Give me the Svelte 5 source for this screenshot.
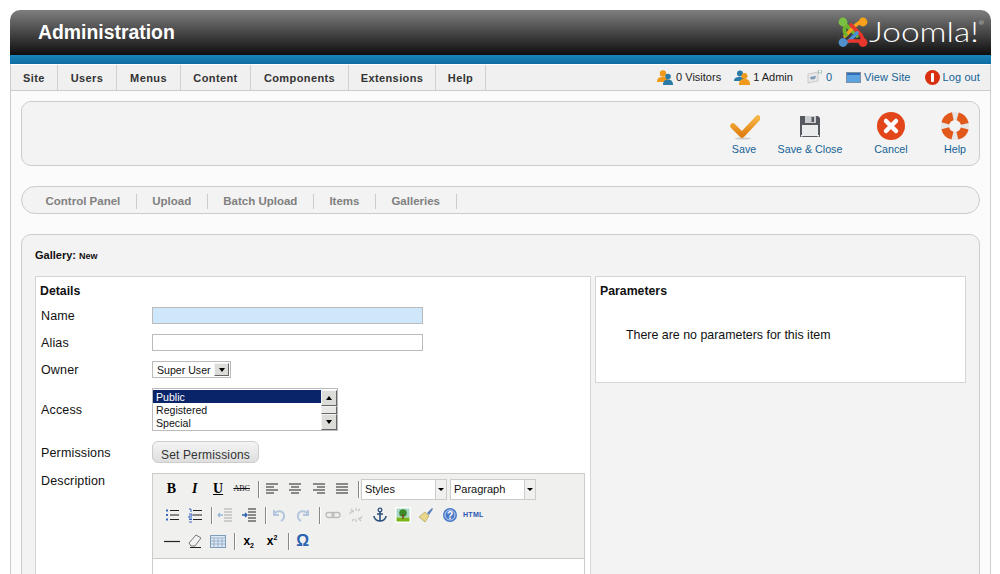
<script>
  // cell widths read off the reference menu bar
  const menu = [
    { label: 'Site', width: 47 },
    { label: 'Users', width: 59 },
    { label: 'Menus', width: 64 },
    { label: 'Content', width: 70 },
    { label: 'Components', width: 98 },
    { label: 'Extensions', width: 87 },
    { label: 'Help', width: 50 }
  ];
  const subnav = ['Control Panel', 'Upload', 'Batch Upload', 'Items', 'Galleries'];
  const access = ['Public', 'Registered', 'Special'];
</script>

<div class="page">
  <header class="head">
    <h1>Administration</h1>
    <div class="logo">
      <svg width="30" height="31" viewBox="0 0 30 31">
        <g fill="none" stroke-width="3.6" stroke-linecap="round">
          <path d="M5 6 L8 8 L19 19" stroke="#6fb52c" />
          <path d="M25 6 C22 5 20 6 18 8 L7 19" stroke="#f4a21d" />
          <path d="M13 8 L23 18 C25 21 25 23 25 25" stroke="#e8382d" />
          <path d="M5 25 C8 26 10 25 12 23 L19 16" stroke="#4a90d6" />
          <path d="M8 8 C6 11 6 15 8 18" stroke="#6fb52c" />
          <path d="M11 24 L21 24" stroke="#e8382d" />
        </g>
        <circle cx="5" cy="5" r="4.4" fill="#7ac143" />
        <circle cx="25" cy="5" r="4.4" fill="#f9a11b" />
        <circle cx="5" cy="25.5" r="4.4" fill="#5091cd" />
        <circle cx="25" cy="25.5" r="4.4" fill="#e8382d" />
      </svg>
      <span class="wordmark"><span>Joomla!<sup>®</sup></span></span>
    </div>
  </header>
  <div class="band"></div>

  <nav class="menubar">
    <ul class="menu">
      {#each menu as item}
        <li style="width: {item.width}px">{item.label}</li>
      {/each}
    </ul>
    <div class="status">
      <span class="stat">
        <svg width="16" height="15" viewBox="0 0 16 15">
          <circle cx="6" cy="3.500" r="3.200" fill="#f09a1c" /><path d="M0 12c0-4 2-5 6-5s5 1 5 5z" fill="#f09a1c" />
          <circle cx="11" cy="6.500" r="2.800" fill="#2a7ba8" /><path d="M6 15c0-4 2-5.500 5-5.500s5 1.500 5 5.500z" fill="#2a7ba8" />
        </svg>
        0 Visitors
      </span>
      <span class="stat admin">
        <svg width="16" height="15" viewBox="0 0 16 15">
          <circle cx="6" cy="3.500" r="3" fill="#2a7ba8" /><path d="M0 11c0-3 2-4 5.500-4s5 1 5 4z" fill="#2a7ba8" />
          <circle cx="10.500" cy="6" r="3" fill="#f09a1c" /><path d="M5 15c0-5 2-6 5.500-6s5.500 1 5.500 6z" fill="#f09a1c" />
        </svg>
        1 Admin
      </span>
      <span class="stat msgs">
        <svg width="15" height="14" viewBox="0 0 15 14">
          <path d="M1 4l10-2v9l-10 2z" fill="#e6e6e6" stroke="#ccc" />
          <path d="M3 7l6-1-1 3-4 .5z" fill="#7d9ab5" />
          <rect x="11.500" y="0" width="3" height="3" fill="#fff" stroke="#8aa" stroke-width=".7" />
        </svg>
        <span class="blue">0</span>
      </span>
      <span class="stat view">
        <svg width="15" height="11" viewBox="0 0 15 11">
          <rect x=".5" y=".5" width="14" height="10" fill="#5aa2e0" stroke="#7d8fa5" />
          <rect x="1" y="1" width="13" height="2" fill="#2f6fb5" />
        </svg>
        <span class="blue">View Site</span>
      </span>
      <span class="stat out">
        <svg width="15" height="15" viewBox="0 0 15 15">
          <circle cx="7.500" cy="7.500" r="7.500" fill="#d8300f" />
          <rect x="6" y="3" width="3" height="9" rx="1" fill="#fff" />
        </svg>
        <span class="blue">Log out</span>
      </span>
    </div>
  </nav>

  <main class="content">
    <section class="toolbar">
      <div class="tool save">
        <svg width="32" height="30" viewBox="0 0 32 30">
          <defs>
            <linearGradient id="chk" x1="0" y1="0" x2="0" y2="1">
              <stop offset="0" stop-color="#f6b544" />
              <stop offset="1" stop-color="#e07f12" />
            </linearGradient>
          </defs>
          <ellipse cx="15" cy="27.500" rx="8" ry="1" fill="#ccc" />
          <path d="M5 15l9 9L30 7" fill="none" stroke="url(#chk)" stroke-width="5.500" stroke-linecap="round" stroke-linejoin="round" />
        </svg>
        Save
      </div>
      <div class="tool saveclose">
        <svg width="24" height="30" viewBox="0 0 24 30">
          <path d="M2 5h18l2 2v19H2z" fill="#55585e" />
          <rect x="7" y="5" width="11" height="7" fill="#c9cbce" />
          <rect x="13.500" y="6" width="2.500" height="5" fill="#55585e" />
          <rect x="4" y="14" width="16" height="11" fill="#e9ebec" />
          <rect x="3" y="24" width="1.500" height="1.500" fill="#fff" />
          <rect x="19.500" y="24" width="1.500" height="1.500" fill="#fff" />
        </svg>
        Save &amp; Close
      </div>
      <div class="tool cancel">
        <svg width="30" height="30" viewBox="0 0 30 30">
          <circle cx="15" cy="15" r="14" fill="#e2461a" />
          <path d="M10 10l10 10M20 10L10 20" stroke="#fff" stroke-width="4.500" stroke-linecap="round" />
        </svg>
        Cancel
      </div>
      <div class="tool help">
        <svg width="30" height="30" viewBox="0 0 30 30">
          <circle cx="15" cy="15" r="10" fill="none" stroke="#e6e6e6" stroke-width="8" />
          <circle cx="15" cy="15" r="10" fill="none" stroke="#e2591c" stroke-width="8" stroke-dasharray="10.700 5" stroke-dashoffset="-2.500" />
        </svg>
        Help
      </div>
    </section>

    <nav class="subnav">
      {#each subnav as item}
        <span>{item}</span>
      {/each}
    </nav>

    <section class="main">
      <div class="pagetitle">Gallery: <small>New</small></div>
      <div class="columns">
        <div class="box details">
          <h2>Details</h2>
          <div class="row name">
            <span class="label">Name</span>
            <input class="text focus" type="text" />
          </div>
          <div class="row">
            <span class="label">Alias</span>
            <input class="text" type="text" />
          </div>
          <div class="row">
            <span class="label">Owner</span>
            <div class="dropdown">
              <span>Super User</span>
              <span class="drop-btn"></span>
            </div>
          </div>
          <div class="row access">
            <span class="label">Access</span>
            <div class="listbox">
              <ul>
                {#each access as item, i}
                  <li class:selected={i === 0}>{item}</li>
                {/each}
              </ul>
              <div class="scroll">
                <span class="sb up"></span>
                <span class="sb thumb"></span>
                <span class="sb down"></span>
              </div>
            </div>
          </div>
          <div class="row perms">
            <span class="label">Permissions</span>
            <button class="setperm">Set Permissions</button>
          </div>
          <div class="row desc">
            <span class="label">Description</span>
            <div class="editor">
              <div class="ed-tools">
                <div class="ed-row first">
                  <span class="ed b">B</span>
                  <span class="ed i">I</span>
                  <span class="ed u">U</span>
                  <span class="ed abc">ABC</span>
                  <span class="ed-sep"></span>
                  {#each ['M2 3h12M2 6h8M2 9h12M2 12h8', 'M2 3h12M4 6h8M2 9h12M4 12h8', 'M2 3h12M6 6h8M2 9h12M6 12h8', 'M2 3h12M2 6h12M2 9h12M2 12h12'] as d}
                    <svg class="ed-icon" width="16" height="16" viewBox="0 0 16 16"><path d={d} stroke="#222" stroke-width="1.200" /></svg>
                  {/each}
                  <span class="ed-sep"></span>
                  <div class="ed-select styles"><span>Styles</span><i></i></div>
                  <div class="ed-select para"><span>Paragraph</span><i></i></div>
                </div>
                <div class="ed-row">
                  <svg class="ed-icon" width="16" height="16" viewBox="0 0 16 16">
                    <path d="M6 3.500h9M6 8h9M6 12.500h9" stroke="#222" stroke-width="1.200" />
                    <path d="M2 3.500h2M2 8h2M2 12.500h2" stroke="#3a66c0" stroke-width="2" />
                  </svg>
                  <svg class="ed-icon" width="16" height="16" viewBox="0 0 16 16">
                    <path d="M6 3.500h9M6 8h9M6 12.500h9" stroke="#222" stroke-width="1.200" />
                    <path d="M2 2h2v3M2 7h3v2H2v2h3M2 12.500h3M2 15h3" fill="none" stroke="#3a66c0" />
                  </svg>
                  <span class="ed-sep"></span>
                  <svg class="ed-icon" width="16" height="16" viewBox="0 0 16 16">
                    <path d="M7 2h8M7 5h8M7 8h8M7 11h8M7 14h8" stroke="#aaa" />
                    <path d="M6 8H1M3 6L1 8l2 2" fill="none" stroke="#9ab8dc" stroke-width="1.300" />
                  </svg>
                  <svg class="ed-icon" width="16" height="16" viewBox="0 0 16 16">
                    <path d="M7 2h8M7 5h8M7 8h8M7 11h8M7 14h8" stroke="#222" />
                    <path d="M1 8h5M4 6l2 2-2 2" fill="none" stroke="#2a62b0" stroke-width="1.300" />
                  </svg>
                  <span class="ed-sep"></span>
                  <svg class="ed-icon" width="16" height="16" viewBox="0 0 16 16">
                    <path d="M3 3v5h5M3 8c2-5 9-5 10 0 .5 3-1 5-3 6" fill="none" stroke="#b4c6de" stroke-width="2" />
                  </svg>
                  <svg class="ed-icon" width="16" height="16" viewBox="0 0 16 16">
                    <path d="M13 3v5H8M13 8C11 3 4 3 3 8c-.5 3 1 5 3 6" fill="none" stroke="#b4c6de" stroke-width="2" />
                  </svg>
                  <span class="ed-sep"></span>
                  <svg class="ed-icon" width="16" height="16" viewBox="0 0 16 16">
                    <rect x="1" y="5.500" width="8" height="5" rx="2.500" fill="none" stroke="#bbb" stroke-width="1.300" />
                    <rect x="7" y="5.500" width="8" height="5" rx="2.500" fill="none" stroke="#bbb" stroke-width="1.300" />
                  </svg>
                  <svg class="ed-icon" width="16" height="16" viewBox="0 0 16 16">
                    <path d="M2 7c0-2 2-3 4-2M14 9c0 2-2 3-4 2M8 1v3M8 12v3M3 2l2 2M13 14l-2-2M12 2l-2 2M4 14l2-2" fill="none" stroke="#c4c4c4" stroke-width="1.200" />
                  </svg>
                  <svg class="ed-icon" width="16" height="16" viewBox="0 0 16 16">
                    <circle cx="8" cy="3" r="1.800" fill="none" stroke="#2b4f7d" stroke-width="1.300" />
                    <path d="M8 5v9M5 7h6M2 9c0 3 3 5 6 5s6-2 6-5" fill="none" stroke="#2b4f7d" stroke-width="1.600" />
                  </svg>
                  <svg class="ed-icon" width="16" height="16" viewBox="0 0 16 16">
                    <rect x="0" y="0" width="16" height="16" fill="#fff" />
                    <rect x="1.500" y="1.500" width="13" height="9" fill="#a8d8c8" />
                    <rect x="1.500" y="10.500" width="13" height="4" fill="#7cb518" />
                    <circle cx="8" cy="6" r="3.800" fill="#3c8a28" />
                    <rect x="7.400" y="7" width="1.300" height="5" fill="#7a3b20" />
                  </svg>
                  <svg class="ed-icon" width="16" height="16" viewBox="0 0 16 16">
                    <path d="M1 10l6-5 4 4-4 6z" fill="#e8d68a" stroke="#a89650" stroke-width=".6" />
                    <path d="M9 6l5-5 1 1-4 6z" fill="#5a7fb8" />
                  </svg>
                  <svg class="ed-icon" width="16" height="16" viewBox="0 0 16 16">
                    <circle cx="8" cy="8" r="7" fill="#4a78c8" />
                    <circle cx="8" cy="8" r="5" fill="none" stroke="#c6d8f2" />
                    <text x="8" y="11.500" text-anchor="middle" class="qmark">?</text>
                  </svg>
                  <span class="ed html">HTML</span>
                </div>
                <div class="ed-row">
                  <svg class="ed-icon" width="16" height="16" viewBox="0 0 16 16"><path d="M0 8.500h16" stroke="#222" stroke-width="1.200" /></svg>
                  <svg class="ed-icon" width="16" height="16" viewBox="0 0 16 16">
                    <path d="M2 10l7-8 5 3-6 8H4z" fill="#f2f2f2" stroke="#777" />
                    <path d="M3 14.500h11" stroke="#222" />
                  </svg>
                  <svg class="ed-icon" width="16" height="16" viewBox="0 0 16 16">
                    <rect x=".5" y="2.500" width="15" height="12" fill="#dfe8f6" stroke="#7f9db9" />
                    <path d="M.5 5h15M4 5v9M8 5v9M12 5v9M.5 8h15M.5 11h15" stroke="#7f9db9" stroke-width=".7" />
                  </svg>
                  <span class="ed-sep"></span>
                  <span class="ed script">x<sub>2</sub></span>
                  <span class="ed script">x<sup>2</sup></span>
                  <span class="ed-sep"></span>
                  <span class="ed omega">Ω</span>
                </div>
              </div>
              <div class="ed-body"></div>
            </div>
          </div>
        </div>

        <div class="box params">
          <h2>Parameters</h2>
          <p>There are no parameters for this item</p>
        </div>
      </div>
    </section>
  </main>
</div>

<style>
  :global(body) {
    margin: 0;
    background: #fff;
  }

  .page {
    height: 574px;
    overflow: hidden;
    box-sizing: border-box;
    padding: 10px 9px 0 10px;
    font-family: "Liberation Sans", Arial, sans-serif;
    color: #111;
  }

  .head {
    height: 45px;
    display: flex;
    justify-content: space-between;
    background: linear-gradient(#7f7f7f, #0e0e0e);
    border-radius: 10px 10px 0 0;
  }
  .head h1 {
    margin: 10px 0 0 28px;
    font-size: 19.400px;
    line-height: 24px;
    color: #fff;
  }
  .logo {
    display: flex;
    align-items: flex-start;
    gap: 1px;
    padding: 7px 10px 0 0;
  }
  .wordmark {
    display: block;
    width: 112px;
    font-family: Lato, sans-serif;
    font-weight: 300;
    font-size: 27px;
    line-height: 30px;
    color: #fff;
  }
  .wordmark > span {
    display: inline-block;
    transform: scaleX(1.24);
    transform-origin: left;
  }
  .wordmark sup {
    font-size: 5px;
    vertical-align: 17px;
    line-height: 0;
  }

  .band {
    height: 9px;
    background: linear-gradient(#1a85b8, #0f6ca3);
  }

  .menubar {
    height: 25px;
    display: flex;
    justify-content: space-between;
    background: #f0f0f0;
    border: 1px solid #ccc;
    border-top-color: #fff;
  }
  .menu {
    display: flex;
    margin: 0;
    padding: 0;
    list-style: none;
  }
  .menu li {
    box-sizing: border-box;
    text-align: center;
    font-size: 11px;
    font-weight: bold;
    letter-spacing: 0.4px;
    line-height: 26px;
    color: #333;
    border-right: 1px solid #d0d0d0;
  }

  .status {
    display: flex;
    align-items: center;
    padding: 0 10px 1px 0;
    font-size: 11px;
  }
  .stat {
    display: flex;
    align-items: center;
    gap: 3px;
    color: #222;
  }
  .stat + .stat { margin-left: 14px; }
  .stat.admin { margin-left: 13px; }
  .msgs { gap: 4px; }
  .view, .out { letter-spacing: 0.1px; }
  .blue { color: #146295; }

  .content {
    background: #fbfbfb;
    border: solid #ccc;
    border-width: 0 1px;
    padding: 10px 10px 0;
    height: 500px;
  }

  .toolbar {
    height: 63px;
    display: flex;
    justify-content: flex-end;
    align-items: flex-start;
    background: #f3f3f3;
    border: 1px solid #ccc;
    border-radius: 10px;
  }
  .tool {
    display: flex;
    flex-direction: column;
    align-items: center;
    gap: 2px;
    padding-top: 9px;
    font-size: 10.700px;
    line-height: 13px;
    color: #146295;
  }
  .tool svg { display: block; }
  .save { width: 40px; margin-right: 13px; }
  .saveclose { width: 66px; margin-right: 28px; }
  .cancel { width: 40px; margin-right: 24px; }
  .help { width: 40px; margin-right: 4px; }

  .subnav {
    height: 26px;
    box-sizing: content-box;
    margin-top: 20px;
    display: flex;
    align-items: center;
    padding-left: 8px;
    background: #f3f3f3;
    border: 1px solid #ccc;
    border-radius: 14px;
  }
  .subnav span {
    padding: 0 15.500px;
    margin-top: 2px;
    font-size: 11.500px;
    font-weight: bold;
    line-height: 15px;
    color: #808080;
    border-right: 1px solid #ccc;
  }

  .main {
    margin-top: 20px;
    padding: 13px 13px 0;
    height: 400px;
    background: #f3f3f3;
    border: 1px solid #ccc;
    border-radius: 10px;
  }
  .pagetitle {
    font-size: 11px;
    font-weight: bold;
    line-height: 14px;
  }
  .pagetitle small {
    font-size: 9px;
  }

  .columns {
    display: flex;
    align-items: flex-start;
    gap: 4px;
    margin-top: 13px;
  }
  .box {
    background: #fff;
    border: 1px solid #d5d5d5;
    box-sizing: border-box;
  }
  .box h2 {
    margin: 0;
    font-size: 12.300px;
    line-height: 14px;
  }
  .details {
    width: 556px;
    height: 330px;
    padding: 7px 4px 0 4px;
  }
  .params {
    width: 371px;
    height: 107px;
    padding: 7px 4px 0 4px;
  }
  .params p {
    margin: 30px 0 0 26px;
    font-size: 12.400px;
    line-height: 14px;
  }

  .row {
    display: flex;
    align-items: center;
    margin-top: 10px;
    padding-left: 1px;
  }
  .row.name { margin-top: 9px; }
  .label {
    width: 111px;
    flex: none;
    font-size: 12.500px;
    letter-spacing: 0.15px;
    line-height: 14px;
  }
  .text {
    display: block;
    width: 271px;
    height: 17px;
    margin: 0;
    padding: 0;
    box-sizing: border-box;
    background: #fff;
    border: 1px solid #bbb;
  }
  .focus {
    background: #cfe7fb;
  }

  .dropdown {
    width: 79px;
    height: 17px;
    box-sizing: border-box;
    display: flex;
    justify-content: space-between;
    align-items: center;
    padding: 0 1px 0 4px;
    font-size: 10.600px;
    border: 1px solid #bbb;
    background: #fff;
  }
  .drop-btn, .sb {
    position: relative;
    display: block;
    box-sizing: border-box;
    background: #dcdcd8;
    border: 1px solid;
    border-color: #f4f4f4 #666 #666 #f4f4f4;
  }
  .drop-btn {
    width: 15px;
    height: 13px;
  }
  .drop-btn::after, .up::after, .down::after {
    content: "";
    position: absolute;
    left: 50%;
    top: 50%;
    margin: -2px 0 0 -3px;
    border: solid transparent;
    border-width: 4px 3px 0;
    border-top-color: #000;
  }
  .up::after {
    border-width: 0 3px 4px;
    border-bottom-color: #000;
  }

  .listbox {
    width: 186px;
    height: 43px;
    box-sizing: border-box;
    display: flex;
    justify-content: space-between;
    padding: 1px 0 0 0;
    background: #fff;
    border: 1px solid #bbb;
  }
  .listbox ul {
    width: 168px;
    margin: 0;
    padding: 0;
    list-style: none;
    font-size: 10.600px;
    line-height: 12px;
  }
  .listbox li { padding: 1px 0 0 3px; }
  .listbox li.selected {
    background: #0a246a;
    color: #fff;
  }
  .scroll {
    width: 16px;
    display: flex;
    flex-direction: column;
  }
  .sb { width: 16px; }
  .up, .down { height: 16px; }
  .thumb { height: 9px; background: #e8e8e4; }

  .perms {
    margin-top: 10px;
    align-items: flex-start;
  }
  .perms .label { padding-top: 5px; }
  .setperm {
    width: 107px;
    height: 22px;
    margin: 0;
    padding: 6px 0 0;
    font: 12px "Liberation Sans", Arial, sans-serif;
    letter-spacing: 0.15px;
    color: #333;
    background: linear-gradient(#f4f4f4, #dedede);
    border: 1px solid #ccc;
    border-radius: 6px;
  }

  .desc {
    margin-top: 10px;
    align-items: flex-start;
  }
  .desc .label { padding-top: 1px; }
  .editor {
    width: 433px;
    border: 1px solid #ccc;
    box-sizing: border-box;
    background: #fff;
  }
  .ed-tools {
    height: 85px;
    box-sizing: border-box;
    padding-top: 2px;
    background: #f0f0ee;
    border-bottom: 1px solid #ccc;
  }
  .ed-row {
    display: flex;
    align-items: center;
    height: 26px;
    padding-left: 10.500px;
    gap: 7.300px;
  }
  .ed-icon {
    display: block;
    flex: none;
  }
  .ed {
    width: 16px;
    flex: none;
    text-align: center;
    line-height: 16px;
  }
  .b, .i, .u {
    font-family: "Liberation Serif", serif;
    font-size: 14px;
    font-weight: bold;
    color: #000;
  }
  .i { font-style: italic; }
  .u { text-decoration: underline; }
  .abc {
    font-family: "Liberation Serif", serif;
    font-size: 8px;
    text-decoration: line-through;
    color: #111;
  }
  .html {
    font-size: 7px;
    font-weight: bold;
    letter-spacing: 0.3px;
    color: #2a55b0;
    width: 18px;
    margin-left: -2px;
  }
  .script {
    font-size: 12px;
    font-weight: bold;
    color: #000;
  }
  .script sub, .script sup {
    font-size: 7px;
    line-height: 0;
  }
  .omega {
    font-size: 16px;
    font-weight: bold;
    color: #2a62b0;
  }
  .qmark {
    font-size: 10px;
    font-weight: bold;
    fill: #fff;
  }
  .ed-sep {
    width: 1px;
    height: 17px;
    flex: none;
    margin: 0 -3px 0 1px;
    background: #888;
    border-right: 1px solid #fff;
  }
  .ed-select {
    height: 21px;
    display: flex;
    box-sizing: border-box;
    flex: none;
    background: #fff;
    border: 1px solid #ccc;
    font-size: 11px;
    line-height: 19px;
  }
  .ed-select span {
    flex: 1;
    padding-left: 3px;
    border-right: 1px solid #ccc;
  }
  .ed-select i {
    position: relative;
    width: 10px;
    background: #f0f0ee;
  }
  .ed-select i::after {
    content: "";
    position: absolute;
    left: 2px;
    top: 8px;
    border: solid transparent;
    border-width: 3px 3px 0;
    border-top-color: #000;
  }
  .styles { width: 86px; margin-left: -3.500px; }
  .para { width: 86px; margin-left: -4.300px; }
  .ed-body { height: 200px; }
</style>
